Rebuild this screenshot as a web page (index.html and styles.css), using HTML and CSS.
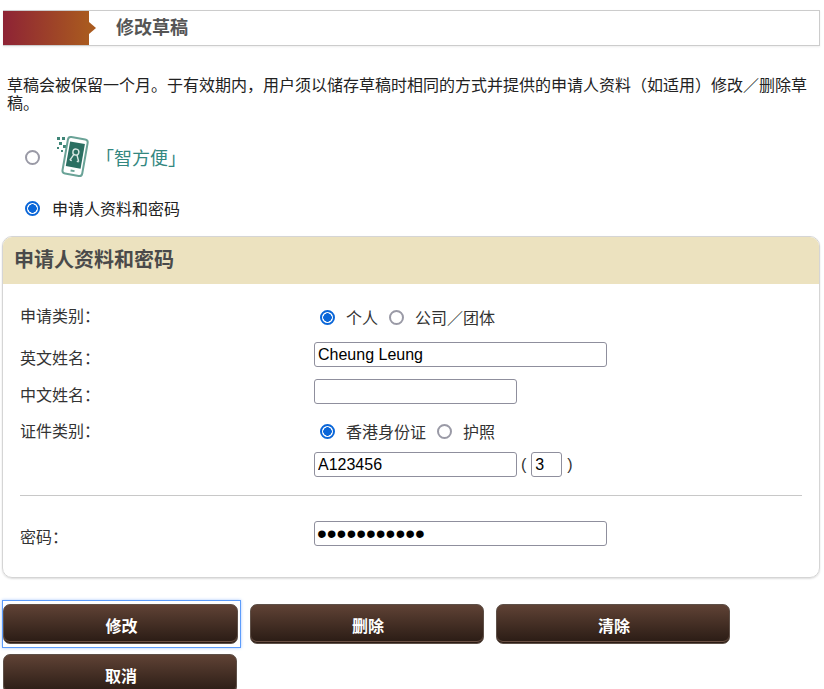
FILE: index.html
```html
<!DOCTYPE html>
<html lang="zh-CN">
<head>
<meta charset="UTF-8" />
<meta name="viewport" content="width=device-width, initial-scale=1" />
<title>修改草稿</title>
<link rel="stylesheet" href="styles.css">
</head>
<body>

<div class="page-title">
  <div class="title-mark"></div>
  <h1>修改草稿</h1>
</div>

<p class="intro">草稿会被保留一个月。于有效期内，用户须以储存草稿时相同的方式并提供的申请人资料（如适用）修改／删除草稿。</p>

<div class="login-choice choice-app">
  <input type="radio" name="login" class="radio">
  <svg class="app-icon" viewBox="0 0 32 44" width="32" height="44">
    <g fill="#3f8577">
      <rect x="0" y="2" width="3" height="3"/>
      <rect x="5" y="2" width="3" height="3"/>
      <rect x="2" y="7" width="3" height="3"/>
      <rect x="0" y="12" width="2" height="2"/>
      <rect x="6" y="10" width="3" height="3"/>
      <rect x="4" y="15" width="2" height="2"/>
    </g>
    <g transform="rotate(10 18 22)">
      <rect x="8" y="3" width="20" height="37" rx="3" fill="#fff" stroke="#6aa397" stroke-width="2"/>
      <rect x="10.500" y="7.500" width="15" height="25" fill="#2b6f62"/>
      <rect x="16" y="35" width="4" height="2" fill="#6aa397"/>
      <circle cx="18" cy="17" r="3" fill="none" stroke="#d7e6e2" stroke-width="1.400"/>
      <path d="M13.500 26l3-6.500M22.500 26l-3-6.500M13.500 26h2M20.500 26h2" fill="none" stroke="#d7e6e2" stroke-width="1.400"/>
    </g>
  </svg>
  <span class="app-name">「智方便」</span>
</div>

<div class="login-choice choice-pass">
  <input type="radio" name="login" class="radio" checked>
  <span>申请人资料和密码</span>
</div>

<div class="panel">
  <h2 class="panel-head">申请人资料和密码</h2>
  <div class="panel-body">
    <div class="row row-type">
      <label>申请类别：</label>
      <div class="radios">
        <input type="radio" name="kind" class="radio" checked><span>个人</span>
        <input type="radio" name="kind" class="radio"><span>公司／团体</span>
      </div>
    </div>
    <div class="row row-en">
      <label>英文姓名：</label>
      <input type="text" class="field field-long" value="Cheung Leung">
    </div>
    <div class="row row-cn">
      <label>中文姓名：</label>
      <input type="text" class="field field-short">
    </div>
    <div class="row row-doc">
      <label>证件类别：</label>
      <div>
        <div class="radios">
          <input type="radio" name="doc" class="radio" checked><span>香港身份证</span>
          <input type="radio" name="doc" class="radio"><span>护照</span>
        </div>
        <div class="id-line">
          <input type="text" class="field field-short" value="A123456">
          <span class="paren-open">(</span>
          <input type="text" class="field field-digit" value="3">
          <span>)</span>
        </div>
      </div>
    </div>
    <hr>
    <div class="row row-pass">
      <label>密码：</label>
      <input type="password" class="field field-long field-pass" value="12345678901">
    </div>
  </div>
</div>

<div class="buttons">
  <button class="btn focused">修改</button>
  <button class="btn">删除</button>
  <button class="btn">清除</button>
  <button class="btn">取消</button>
</div>

</body>
</html>
```

FILE: styles.css
```css
html, body {
  overflow: hidden;
}

body {
  margin: 0;
  height: 689px;
  padding: 10px 4px 0 3px;
  box-sizing: border-box;
  font-family: "Liberation Sans", "Noto Sans CJK SC", sans-serif;
  font-size: 16px;
  color: #333;
}

.page-title {
  display: flex;
  align-items: center;
  height: 36px;
  box-sizing: border-box;
  border: 1px solid #ccc;
  border-left: 0;
  box-shadow: 0 1px 2px #eee;
}

.title-mark {
  position: relative;
  width: 86px;
  height: 100%;
  background: linear-gradient(to right, #8e2335, #a95a1f);
}

.title-mark::after {
  content: "";
  position: absolute;
  left: 86px;
  top: 11px;
  border-left: 7px solid #a95a1f;
  border-top: 6px solid transparent;
  border-bottom: 6px solid transparent;
}

.page-title h1 {
  margin: -4px 0 0 27px;
  font-size: 18px;
  font-weight: bold;
  color: #555;
}

.intro {
  margin: 31px 0 0 4px;
  line-height: 18px;
  font-size: 16px;
  color: #222;
}

.radio {
  appearance: none;
  flex: none;
  width: 15px;
  height: 15px;
  margin: 0;
  border: 2px solid #9a9aa6;
  border-radius: 50%;
  background: #fff;
}

.radio:checked {
  border-color: #0a66d8;
  background: radial-gradient(circle, #0a66d8 0 4px, #fff 4.500px);
}

.login-choice {
  display: flex;
  align-items: center;
  margin-left: 22px;
}

.choice-app {
  margin-top: 20px;
  height: 48px;
}

.app-icon {
  margin-left: 17px;
}

.app-name {
  margin-left: 7px;
  font-size: 18px;
  color: #33877f;
}

.choice-pass {
  margin-top: 15px;
  color: #222;
}

.choice-pass .radio {
  margin-right: 12px;
}

.panel {
  margin: 16px 0 0 -1px;
  border: 1px solid #d5d5d5;
  border-radius: 10px;
  box-shadow: 0 1px 2px #ddd;
  overflow: hidden;
}

.panel-head {
  margin: 0;
  height: 47px;
  padding-left: 11px;
  line-height: 47px;
  background: #ece2bf;
  font-size: 20px;
  font-weight: bold;
  color: #4a4a4a;
}

.panel-body {
  padding: 17px 17px 0 17px;
  height: 293px;
  box-sizing: border-box;
}

.row {
  display: grid;
  grid-template-columns: 294px 1fr;
  color: #333;
}

.row label {
  padding-top: 3px;
}

.radios {
  display: flex;
  align-items: center;
  height: 24px;
  padding-left: 6px;
}

.radios span {
  margin-left: 11px;
  margin-right: 11px;
}

.row-type {
  height: 41px;
}

.row-type label {
  padding-top: 2px;
}

.row-type .radios {
  margin-top: 4px;
}

.row-en {
  height: 37px;
}

.row-cn {
  height: 40px;
}

.row-doc label {
  padding-top: 0;
  margin-top: -1px;
}

.field {
  display: block;
  height: 25px;
  box-sizing: border-box;
  padding: 0 3px;
  border: 1px solid #8f8f9d;
  border-radius: 3px;
  font-family: "Liberation Sans", sans-serif;
  font-size: 16px;
  color: #000;
}

.field-long {
  width: 293px;
}

.field-short {
  width: 203px;
}

.field-digit {
  width: 31px;
}

.field-pass {
  font-size: 28px;
  padding: 0 2px;
}

.id-line {
  display: flex;
  align-items: center;
  gap: 5px;
  margin-top: 9px;
}

.paren-open {
  margin-left: -1px;
}

hr {
  margin: 18px 0 25px;
  border: 0;
  border-top: 1px solid #c8c8c8;
}

.buttons {
  display: flex;
  flex-wrap: wrap;
  gap: 10px 12px;
  margin-top: 26px;
}

.btn {
  width: 234px;
  height: 40px;
  border: 1px solid #5e5048;
  border-radius: 7px;
  background: linear-gradient(to bottom, #5f4235, #291b14);
  box-shadow: inset 0 -1px 0 #2a1b14, inset 0 -2px 0 #6a5044;
  font-family: "Liberation Sans", "Noto Sans CJK SC", sans-serif;
  font-size: 16px;
  font-weight: bold;
  color: #fff;
  padding: 2px 0 0 2px;
}

.btn.focused {
  position: relative;
  width: 235px;
}

.btn.focused::after {
  content: "";
  position: absolute;
  inset: -5px -4px -5px -2px;
  border: 1px solid #5c9cfb;
  box-shadow: 0 0 3px #a9c9fd;
}
```
